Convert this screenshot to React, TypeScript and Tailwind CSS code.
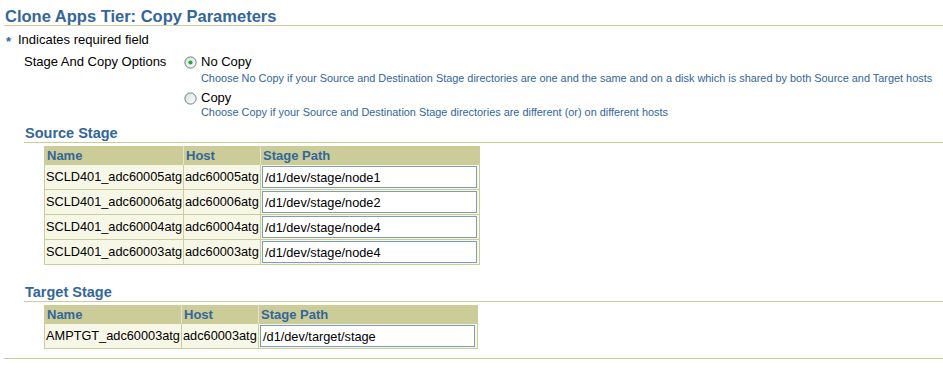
import React from "react";

const Radio = ({ checked }: { checked?: boolean }) => (
  <svg width="13" height="13" viewBox="0 0 13 13" className="shrink-0">
    <defs>
      <linearGradient id={checked ? "rg1" : "rg2"} x1="0" y1="0" x2="1" y2="1">
        <stop offset="0" stopColor="#dcdcd6" />
        <stop offset="1" stopColor="#ffffff" />
      </linearGradient>
    </defs>
    <circle cx="6.5" cy="6.5" r="5.6" fill={`url(#${checked ? "rg1" : "rg2"})`} stroke="#5f7d98" strokeWidth="1" />
    {checked && <circle cx="6.5" cy="6.5" r="2.1" fill="#2ea336" />}
  </svg>
);

type Row = { name: string; host: string; path: string };

const StageTable = ({
  rows,
  widths,
  tableWidth,
}: {
  rows: Row[];
  widths: [string, string, string];
  tableWidth: string;
}) => (
  <table className={`border-collapse border border-[#cccc99] text-[12.75px] table-fixed ${tableWidth}`}>
    <colgroup>
      <col className={widths[0]} />
      <col className={widths[1]} />
      <col className={widths[2]} />
    </colgroup>
    <thead>
      <tr className="h-[18px] bg-[#cccc99]">
        <th className="border-r border-[#e4e4c8] px-[2px] text-left text-[13px] font-bold text-[#336699] leading-[17px]">
          Name
        </th>
        <th className="border-r border-[#e4e4c8] px-[2px] text-left text-[13px] font-bold text-[#336699] leading-[17px]">
          Host
        </th>
        <th className="px-[2px] text-left text-[13px] font-bold text-[#336699] leading-[17px]">
          Stage Path
        </th>
      </tr>
    </thead>
    <tbody>
      {rows.map((r, i) => (
        <tr key={i} className="h-[25px] bg-[#f7f7e7]">
          <td className="overflow-hidden border border-[#cccc99] pl-[1px] pr-0 whitespace-nowrap">{r.name}</td>
          <td className="overflow-hidden border border-[#cccc99] pl-[1px] pr-0 whitespace-nowrap">{r.host}</td>
          <td className="border border-[#cccc99] p-0 pl-[1px] align-top">
            <div className="pt-[1px]">
              <input
                readOnly
                value={r.path}
                className="box-border block h-[22px] w-[215px] border border-[#7f9db9] bg-white px-[2px] text-[12.75px] text-black outline-none font-['Liberation_Sans',Arial,sans-serif]"
              />
            </div>
          </td>
        </tr>
      ))}
    </tbody>
  </table>
);

export default function App() {
  const source: Row[] = [
    { name: "SCLD401_adc60005atg", host: "adc60005atg", path: "/d1/dev/stage/node1" },
    { name: "SCLD401_adc60006atg", host: "adc60006atg", path: "/d1/dev/stage/node2" },
    { name: "SCLD401_adc60004atg", host: "adc60004atg", path: "/d1/dev/stage/node4" },
    { name: "SCLD401_adc60003atg", host: "adc60003atg", path: "/d1/dev/stage/node4" },
  ];
  const target: Row[] = [
    { name: "AMPTGT_adc60003atg", host: "adc60003atg", path: "/d1/dev/target/stage" },
  ];

  return (
    <div className="w-[943px] h-[371px] overflow-hidden bg-white pl-[4px] text-[13px] text-black font-['Liberation_Sans',Arial,sans-serif]">
      <div className="h-[26px] border-b border-[#cccc99] pt-[7px] pl-[1px]">
        <h1 className="text-[16.5px] font-bold leading-[18px] text-[#336699]">
          Clone Apps Tier: Copy Parameters
        </h1>
      </div>

      <div className="mt-[6px] flex h-[16px] items-start leading-[16px]">
        <span className="w-[14px] pl-[2px] pt-[2px] text-[13px] font-bold text-[#336699]">*</span>
        <span>Indicates required field</span>
      </div>

      <div className="mt-[6px] flex">
        <div className="w-[180px] pl-[20px] leading-[16px]">Stage And Copy Options</div>
        <div className="flex flex-col">
          <div className="flex h-[16px] items-center gap-[4px] leading-[16px]">
            <Radio checked />
            <span>No Copy</span>
          </div>
          <div className="mt-[2px] pl-[17px] text-[10.9px] leading-[13px] text-[#336699]">
            Choose No Copy if your Source and Destination Stage directories are one and the same and on a disk which is shared by both Source and Target hosts
          </div>
          <div className="mt-[5px] flex h-[16px] items-center gap-[4px] leading-[16px]">
            <Radio />
            <span>Copy</span>
          </div>
          <div className="pl-[17px] text-[10.9px] leading-[13px] text-[#336699]">
            Choose Copy if your Source and Destination Stage directories are different (or) on different hosts
          </div>
        </div>
      </div>

      <div className="ml-[20px] mt-[6px] h-[18px] border-b border-[#cccc99] pl-[1px]">
        <h2 className="text-[14.5px] font-bold leading-[17px] text-[#336699]">Source Stage</h2>
      </div>
      <div className="ml-[40px] mt-[3px]">
        <StageTable
          rows={source}
          tableWidth="w-[435px]"
          widths={["w-[139px]", "w-[77px]", "w-[219px]"]}
        />
      </div>

      <div className="ml-[20px] mt-[19px] h-[18px] border-b border-[#cccc99] pl-[1px]">
        <h2 className="text-[14.5px] font-bold leading-[17px] text-[#336699]">Target Stage</h2>
      </div>
      <div className="ml-[40px] mt-[3px]">
        <StageTable
          rows={target}
          tableWidth="w-[433px]"
          widths={["w-[137px]", "w-[77px]", "w-[219px]"]}
        />
      </div>

      <div className="mt-[9px] border-t border-[#cccc99]" />
    </div>
  );
}
